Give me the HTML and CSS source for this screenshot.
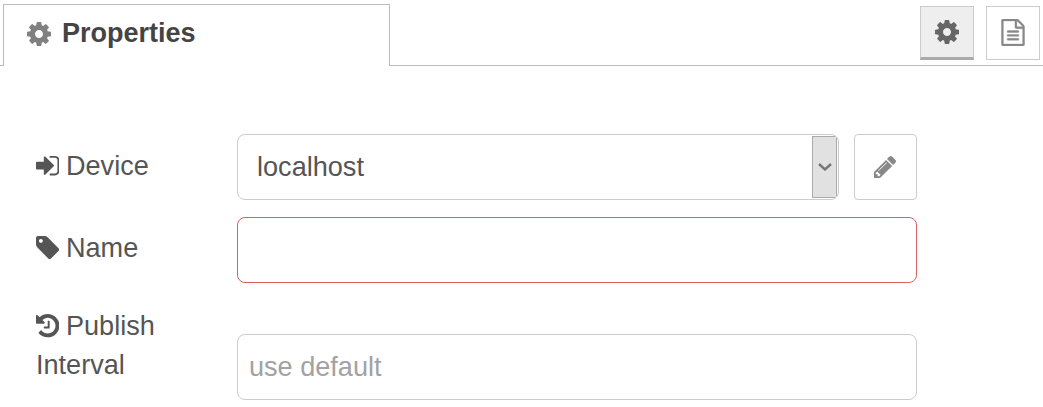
FILE: index.html
```
<!DOCTYPE html>
<html lang="en">
<head>
<meta charset="utf-8">
<title>Properties</title>
<link rel="stylesheet" href="styles.css">
</head>
<body>
<svg class="sprite" aria-hidden="true">
  <symbol id="cog" viewBox="128 0 1536 1792"><path d="M1152 896q0-106-75-181t-181-75-181 75-75 181 75 181 181 75 181-75 75-181zm512-109v222q0 12-8 23t-20 13l-185 28q-19 54-39 91 35 50 107 138 10 12 10 25t-9 23q-27 37-99 108t-94 71q-12 0-26-9l-138-108q-44 23-91 38-16 136-29 186-7 28-36 28h-222q-14 0-24.5-8.5t-11.5-21.5l-28-184q-49-16-90-37l-141 107q-10 9-25 9-14 0-25-11-126-114-165-168-7-10-7-23 0-12 8-23 15-21 51-66.5t54-70.5q-27-50-41-99l-183-27q-13-2-21-12.5t-8-23.5v-222q0-12 8-23t19-13l186-28q14-46 39-92-40-57-107-138-10-12-10-24 0-10 9-23 26-36 98.5-107.5t94.5-71.5q13 0 26 10l138 107q44-23 91-38 16-136 29-186 7-28 36-28h222q14 0 24.5 8.5t11.5 21.5l28 184q49 16 90 37l142-107q9-9 24-9 13 0 25 10 129 119 165 170 7 8 7 22 0 12-8 23-15 21-51 66.5t-54 70.5q26 50 41 98l183 28q13 2 21 12.5t8 23.5z"/></symbol>
</svg>
<header class="tabs">
  <div class="tab">
    <svg class="icon tab-icon"><use href="#cog"/></svg>
    <span>Properties</span>
  </div>
  <div class="tools">
    <button class="tool active" aria-label="Properties"><svg class="icon"><use href="#cog"/></svg></button>
    <button class="tool" aria-label="Description"><svg class="icon doc" viewBox="128 0 1536 1792"><path d="M1596 380q28 28 48 76t20 88v1152q0 40-28 68t-68 28h-1344q-40 0-68-28t-28-68v-1600q0-40 28-68t68-28h896q40 0 88 20t76 48zm-444-244v376h376q-10-29-22-41l-313-313q-12-12-41-22zm384 1528v-1024h-416q-40 0-68-28t-28-68v-416h-768v1536h1280zm-1024-864q0-14 9-23t23-9h704q14 0 23 9t9 23v64q0 14-9 23t-23 9h-704q-14 0-23-9t-9-23v-64zm736 224q14 0 23 9t9 23v64q0 14-9 23t-23 9h-704q-14 0-23-9t-9-23v-64q0-14 9-23t23-9h704zm0 256q14 0 23 9t9 23v64q0 14-9 23t-23 9h-704q-14 0-23-9t-9-23v-64q0-14 9-23t23-9h704z"/></svg></button>
  </div>
</header>
<main class="form">
  <div class="row">
    <div class="label"><svg class="icon" viewBox="128 0 1536 1792"><path d="M1312 896q0 26-19 45l-544 544q-19 19-45 19t-45-19-19-45v-288h-448q-26 0-45-19t-19-45v-384q0-26 19-45t45-19h448v-288q0-26 19-45t45-19 45 19l544 544q19 19 19 45zm352-352v704q0 119-84.5 203.5t-203.5 84.5h-320q-13 0-22.5-9.5t-9.5-22.5q0-4-1-20t-.5-26.5 3-23.5 10-19.5 20.5-6.5h320q66 0 113-47t47-113v-704q0-66-47-113t-113-47h-312l-11.5-1-11.5-3-8-5.5-7-9-2-13.5q0-4-1-20t-.5-26.5 3-23.5 10-19.5 20.5-6.5h320q119 0 203.5 84.5t84.5 203.5z"/></svg>Device</div>
    <div class="field select">
      <span class="value">localhost</span>
      <span class="arrow"><svg class="chevron" viewBox="0 0 14 8"><path d="M1 1l6 5.5L13 1"/></svg></span>
    </div>
    <button class="edit" aria-label="Edit"><svg class="pencil" viewBox="128 149 1515 1515"><path d="M491 1536l91-91-235-235-91 91v107h128v128h107zm523-928q0-22-22-22-10 0-17 7l-542 542q-7 7-7 17 0 22 22 22 10 0 17-7l542-542q7-7 7-17zm-54-192l416 416-832 832h-416v-416zm683 96q0 53-37 90l-166 166-416-416 166-165q36-38 90-38 53 0 91 38l235 234q37 39 37 91z"/></svg></button>
  </div>
  <div class="row">
    <div class="label name"><svg class="icon" viewBox="128 0 1536 1792"><path d="M576 448q0-53-37.5-90.5t-90.5-37.5-90.5 37.5-37.5 90.5 37.5 90.5 90.5 37.5 90.5-37.5 37.5-90.5zm1067 576q0 53-37 90l-491 492q-39 37-91 37-53 0-90-37l-715-716q-38-37-64.5-101t-26.5-117v-416q0-52 38-90t90-38h416q53 0 117 26.5t102 64.5l715 714q37 39 37 91z"/></svg>Name</div>
    <div class="field error"></div>
  </div>
  <div class="row interval">
    <div class="label"><svg class="icon" viewBox="128 0 1536 1792"><path d="M1664 896q0 156-61 298t-164 245-245 164-298 61q-172 0-327-72.5t-264-204.5q-7-10-6.5-22.5t8.5-20.5l137-138q10-9 25-9 16 2 23 12 73 95 179 147t225 52q104 0 198.5-40.5t163.5-109.5 109.5-163.5 40.5-198.5-40.5-198.5-109.5-163.5-163.5-109.5-198.5-40.5q-98 0-188 35.5t-160 101.5l137 138q31 30 14 69-17 40-59 40h-448q-26 0-45-19t-19-45v-448q0-42 40-59 39-17 69 14l130 129q107-101 244.5-156.5t284.5-55.5q156 0 298 61t245 164 164 245 61 298zm-640-288v448q0 14-9 23t-23 9h-320q-14 0-23-9t-9-23v-64q0-14 9-23t23-9h224v-352q0-14 9-23t23-9h64q14 0 23 9t9 23z"/></svg>Publish<br>Interval</div>
    <div class="field placeholder">use default</div>
  </div>
</main>
</body>
</html>
```
FILE: styles.css
```
* { box-sizing: border-box; }
body {
  margin: 0;
  height: 407px;
  overflow: hidden;
  background: #fff;
  color: #555;
  font: 27.1px/39px "Liberation Sans", Arial, sans-serif;
}
.sprite { display: none; }
.icon { width: 24px; height: 28px; fill: currentColor; flex: none; }

.tabs {
  display: flex;
  justify-content: space-between;
  height: 66px;
  padding: 4px 3px 0;
  background: linear-gradient(#bbb, #bbb) left bottom / 100% 1px no-repeat;
}
.tab {
  display: flex;
  align-items: center;
  width: 387px;
  height: 62px;
  padding: 0 0 4px 23px;
  gap: 11px;
  border: 1px solid #bbb;
  border-bottom: 0;
  background: #fff;
  color: #444;
  font-size: 27px;
  font-weight: bold;
}
.tab span { margin-top: -1px; }
.tab-icon { color: #808080; }
.tools { display: flex; gap: 12px; padding-top: 2px; }
.tool {
  display: flex;
  align-items: center;
  justify-content: center;
  width: 54px;
  height: 54px;
  padding: 0;
  border: 1px solid #ccc;
  background: #fff;
  color: #888;
}
.tool.active {
  border-bottom: 3px solid #aaa;
  background: #eee;
  color: #666;
}
.doc { height: 27px; margin-bottom: 1px; stroke: currentColor; stroke-width: 24; }

.form { padding: 68px 0 0 36px; }
.row { display: flex; margin-bottom: 17px; }
.label { width: 201px; padding-top: 12px; white-space: nowrap; }
.label.name { padding-top: 11px; }
.label .icon { width: 23.4px; height: 27.3px; margin-right: 6.6px; vertical-align: -4px; }
.field {
  width: 680px;
  height: 66px;
  border: 1px solid #ccc;
  border-radius: 8px;
  line-height: 64px;
}
.select {
  display: flex;
  justify-content: space-between;
  width: 602px;
  padding-left: 19px;
  overflow: hidden;
}
.arrow {
  display: flex;
  align-items: center;
  justify-content: center;
  width: 25px;
  height: 62px;
  margin: 1px 1px 0 0;
  border: 1px solid #aaa;
  background: #e1e1e1;
}
.chevron { width: 14px; height: 8px; fill: none; stroke: #777; stroke-width: 2.4; }
.edit {
  display: flex;
  align-items: center;
  justify-content: center;
  width: 63px;
  height: 66px;
  margin-left: 15px;
  padding: 0 2px 1px 0;
  border: 1px solid #ccc;
  border-radius: 4px;
  background: #fff;
}
.pencil { width: 22px; height: 22px; fill: #888; }
.error { border-color: #d6615f; }
.interval { align-items: flex-end; }
.interval .label { padding: 0; margin-bottom: 16px; }
.placeholder { margin-top: 34px; padding-left: 11px; color: #a2a2a2; }
```
